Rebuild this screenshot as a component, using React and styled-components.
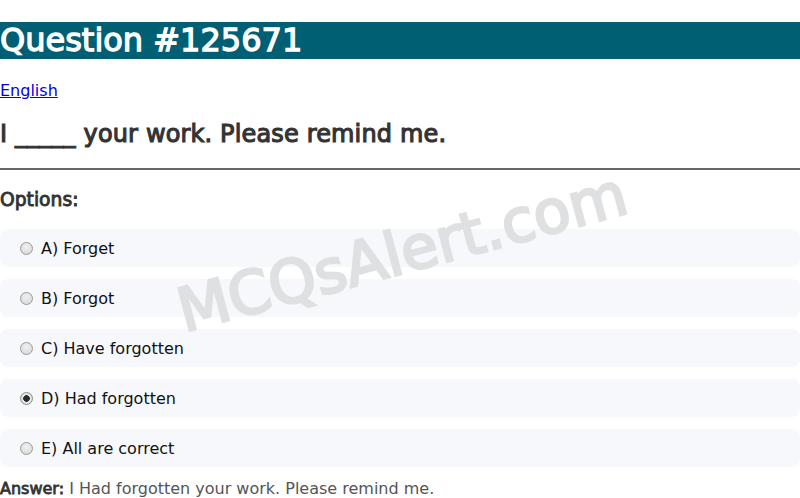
import React from 'react'
import styled, { createGlobalStyle, css } from 'styled-components'

const options = [
  { key: 'A', text: 'Forget' },
  { key: 'B', text: 'Forgot' },
  { key: 'C', text: 'Have forgotten' },
  { key: 'D', text: 'Had forgotten', checked: true },
  { key: 'E', text: 'All are correct' },
]

function App() {
  return (
    <Page>
      <GlobalStyle />
      <Title>Question #125671</Title>
      <Lang>
        <a href="#english">English</a>
      </Lang>
      <QuestionText>I _____ your work. Please remind me.</QuestionText>
      <Divider />
      <OptionsLabel>Options:</OptionsLabel>
      <OptionList>
        {options.map((o) => (
          <Option key={o.key}>
            <Radio type="radio" name="q125671" defaultChecked={!!o.checked} />
            <span>{o.key}) {o.text}</span>
          </Option>
        ))}
      </OptionList>
      <Answer>
        <strong>Answer:</strong> I Had forgotten your work. Please remind me.
      </Answer>
      <Watermark>MCQsAlert.com</Watermark>
    </Page>
  )
}

export default App

const GlobalStyle = createGlobalStyle`
  html, body {
    margin: 0;
    padding: 0;
    background: #fff;
  }
  body {
    font-family: "DejaVu Sans", sans-serif;
    font-size: 16px;
  }
`;

// regular face with a thin outline, like a synthesized bold
const fakeBold = (w) => css`
  font-weight: 400;
  -webkit-text-stroke: ${w}px currentColor;
`;

const Page = styled.div`
  position: relative;
  width: 800px;
  overflow: hidden;
  padding-top: 22px;
`;

const Title = styled.h1`
  margin: 0;
  background: #005f73;
  color: #fff;
  font-size: 32px;
  line-height: 37px;
  ${fakeBold(1.3)}
`;

const Lang = styled.p`
  margin: 22px 0 0;
  line-height: 19px;
  a {
    color: #0000ee;
  }
`;

const QuestionText = styled.h2`
  margin: 20px 0 0;
  color: #333;
  font-size: 24px;
  line-height: 28px;
  letter-spacing: 0.15px;
  ${fakeBold(1.1)}
`;

const Divider = styled.hr`
  margin: 20px 0 0;
  border: none;
  border-top: 2px solid #666;
  height: 0;
`;

const OptionsLabel = styled.h3`
  margin: 19px 0 0;
  color: #333;
  font-size: 18.72px;
  line-height: 22px;
  ${fakeBold(0.9)}
`;

const OptionList = styled.div`
  display: flex;
  flex-direction: column;
  gap: 12px;
  margin-top: 18px;
`;

const Option = styled.label`
  display: flex;
  align-items: center;
  height: 38px;
  padding: 0 15px;
  background: #f7f8fc;
  border-radius: 8px;
  color: #111;
  font-size: 16px;
`;

const Radio = styled.input`
  appearance: none;
  box-sizing: border-box;
  margin: 0 8px 0 5px;
  width: 13px;
  height: 13px;
  border: 1px solid #9a9a9a;
  border-radius: 50%;
  background: radial-gradient(circle at 50% 35%, #f0f0f0, #d6d6d6);
  &:checked {
    background: radial-gradient(circle, #2b2b2b 0 3px, #e4e4e4 3.6px);
    border-color: #8a8a8a;
  }
`;

const Answer = styled.p`
  margin: 12px 0 0;
  color: #555;
  font-size: 16px;
  line-height: 19px;
  strong {
    color: #333;
    ${fakeBold(0.8)}
  }
`;

const Watermark = styled.div`
  position: absolute;
  left: 402px;
  top: 252px;
  transform: translate(-50%, -50%) rotate(-15deg);
  color: #dfe0e2;
  font-size: 60px;
  white-space: nowrap;
  pointer-events: none;
  ${fakeBold(2.6)}
`;
